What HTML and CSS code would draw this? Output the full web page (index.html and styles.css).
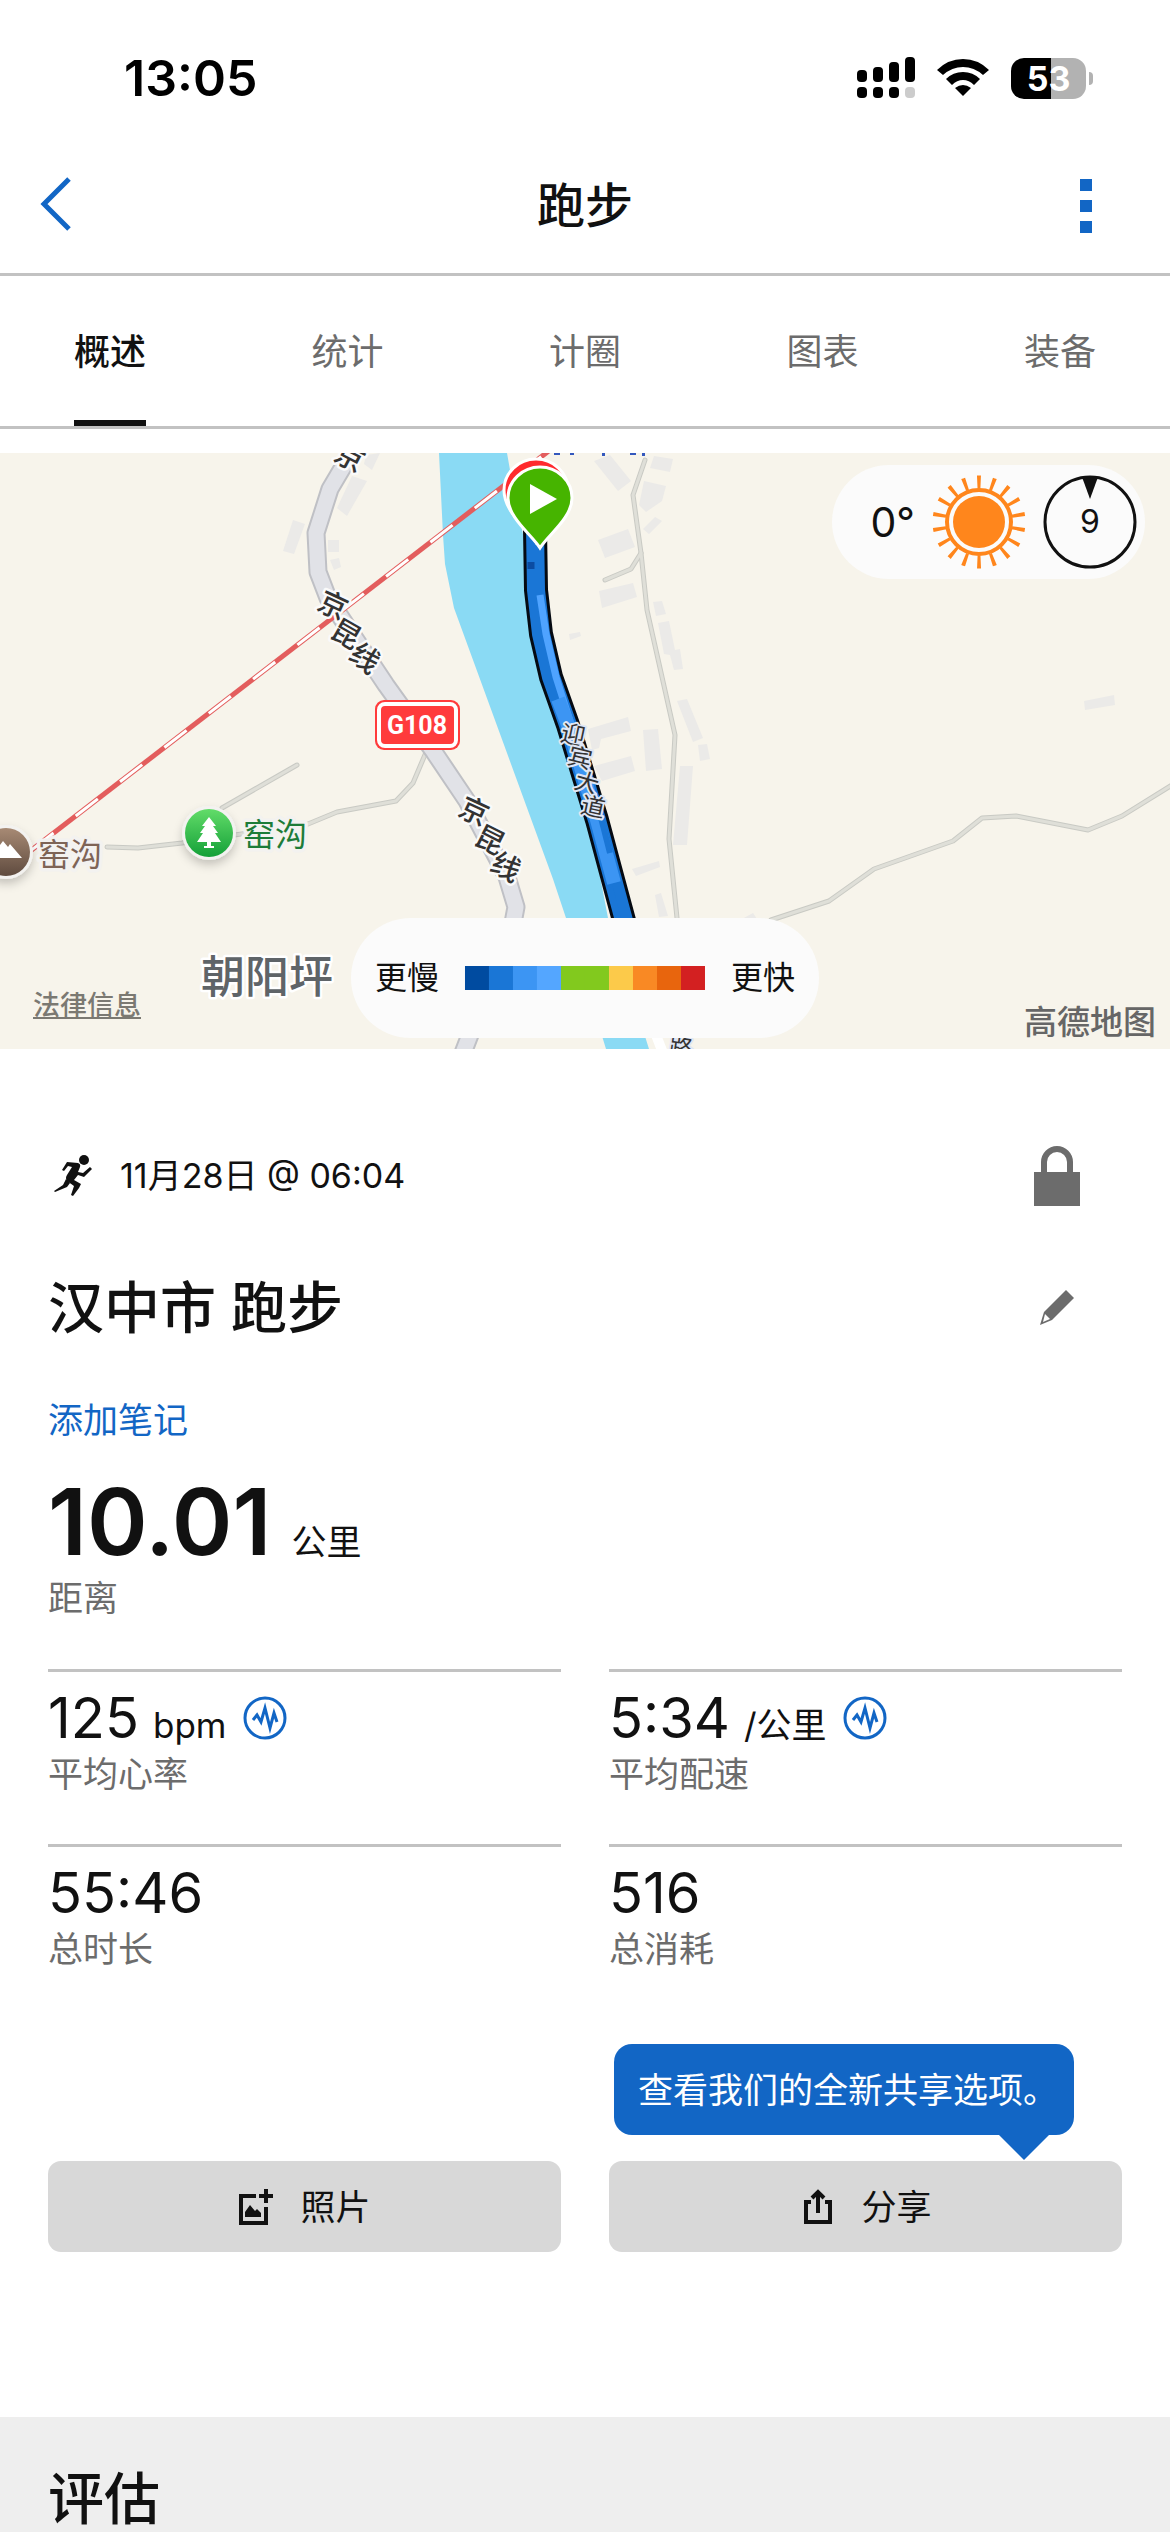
FILE: index.html
```html
<!DOCTYPE html>
<html lang="zh-CN">
<head>
    <meta charset="UTF-8">
    <meta name="viewport" content="width=device-width, initial-scale=1.0">
    <title>跑步</title>
    <link rel="stylesheet" href="styles.css">
</head>
<body>
    <div class="statusbar">
        <span class="time">13:05</span>
        <div class="indicators">
            <svg width="58" height="42" viewBox="0 0 58 42" aria-hidden="true">
                <rect x="0" y="13" width="10" height="12" rx="4"/>
                <rect x="16" y="10" width="10" height="15" rx="4"/>
                <rect x="32" y="5" width="10" height="20" rx="4"/>
                <rect x="48" y="0" width="10" height="25" rx="4"/>
                <rect x="0" y="30" width="10" height="11" rx="4"/>
                <rect x="16" y="30" width="10" height="11" rx="4"/>
                <rect x="32" y="30" width="10" height="11" rx="4"/>
                <rect x="48" y="30" width="10" height="11" rx="4" fill="#ccc"/>
            </svg>
            <svg width="52" height="42" viewBox="0 0 52 42" aria-hidden="true">
                <path d="M0 13Q11 2 26 2T52 13L46 18Q37 10 26 10T6 18Z"/>
                <path d="M9 22Q16 15 26 15T43 22L37 28Q32 23 26 23T15 28Z"/>
                <path d="M18 31Q26 25 34 31L26 39Z"/>
            </svg>
            <div class="battery"><span>53</span></div>
        </div>
    </div>

    <header class="header">
        <button class="icon-btn" aria-label="返回">
            <svg width="32" height="58" viewBox="0 0 32 58"><path d="M29 2L4 27L29 52" fill="none" stroke="#1266c5" stroke-width="5"/></svg>
        </button>
        <h1>跑步</h1>
        <button class="icon-btn more" aria-label="更多">
            <svg width="12" height="54" viewBox="0 0 12 54" fill="#1266c5"><path d="M0 0H12V12H0ZM0 21H12V33H0ZM0 42H12V54H0Z"/></svg>
        </button>
    </header>

    <nav class="tabs">
        <a class="active" href="#">概述</a>
        <a href="#">统计</a>
        <a href="#">计圈</a>
        <a href="#">图表</a>
        <a href="#">装备</a>
    </nav>

    <section class="map">
        <svg class="map-canvas" viewBox="0 0 1170 596" preserveAspectRatio="xMidYMid slice">
            <defs>
                <linearGradient id="green" x1="0" y1="0" x2="0" y2="1"><stop offset="0" stop-color="#62dc69"/><stop offset="1" stop-color="#14a038"/></linearGradient>
                <linearGradient id="brown" x1="0" y1="0" x2="0" y2="1"><stop offset="0" stop-color="#a78a74"/><stop offset="1" stop-color="#5f4b3f"/></linearGradient>
                <filter id="soft" x="-50%" y="-50%" width="200%" height="200%"><feDropShadow dx="0" dy="5" stdDeviation="5" flood-opacity=".2"/></filter>
            </defs>

            <!-- buildings -->
            <g fill="#ebeae8">
                <path d="M293 67L305 71L294 101L283 98ZM352 23L367 28L347 63L337 55ZM328 87H339V99H328ZM330 107L339 105L341 114L334 117ZM366 2L380 0L372 17L364 11Z"/>
                <path d="M594 8L610 2L631 28L618 38ZM654 3L673 6L670 19L650 15ZM644 28L666 33L662 48L646 59L639 52ZM655 64L662 68L649 81L643 76ZM598 87L628 76L635 94L605 105Z"/>
                <path d="M599 138L633 130L637 144L602 155ZM653 149L662 148L666 161L656 163ZM658 170L669 168L675 197L680 196L683 216L674 217L670 202L664 201ZM569 181L580 179L581 183L570 187Z"/>
                <path d="M677 248L687 246L703 285L693 289ZM698 292L707 291L710 306L700 308ZM643 277L658 276L662 316L646 318ZM680 313H693L687 392H673Z"/>
                <path d="M588 276L628 264L631 278L601 286L599 295L592 297ZM594 313L631 303L635 318L602 328ZM632 416L659 408L660 414L636 423ZM655 442L661 440L668 463L659 464ZM742 466L753 460L757 466ZM1084 248L1114 242L1115 252L1085 257Z"/>
            </g>

            <!-- river -->
            <path fill="#8adaf4" d="M439 0L443 82L445 111L454 155L553 426L566 465L606 596H649L608 465L589 366L557 272L532 181L524 86L513 34L507 0Z"/>

            <!-- small roads -->
            <g fill="none" stroke-linejoin="round" stroke-linecap="round">
                <g stroke="#c9cac4" stroke-width="5">
                    <path d="M427 297L413 330L396 348L337 359L308 371L182 390L138 395L107 394"/>
                    <path d="M297 312L222 355"/>
                    <path d="M645 7L633 42L641 100L647 157L675 282L669 386L677 465"/>
                    <path d="M641 100L631 116L605 127"/>
                    <path d="M1172 332L1122 363L1088 377L1016 363L982 365L953 388L874 416L829 448L771 467"/>
                </g>
                <g stroke="#dfdfd8" stroke-width="3">
                    <path d="M427 297L413 330L396 348L337 359L308 371L182 390L138 395L107 394"/>
                    <path d="M297 312L222 355"/>
                    <path d="M645 7L633 42L641 100L647 157L675 282L669 386L677 465"/>
                    <path d="M641 100L631 116L605 127"/>
                    <path d="M1172 332L1122 363L1088 377L1016 363L982 365L953 388L874 416L829 448L771 467"/>
                </g>
                <path d="M656 582L663 600" stroke="#fff" stroke-width="10"/>
            </g>

            <!-- G108 road -->
            <g fill="none" stroke-linejoin="round">
                <path stroke="#bfc0c5" stroke-width="19" d="M356 -8L330 36L316 80L318 119L328 145L386 232L434 299L467 348L507 424L516 454L513 470L463 600"/>
                <path stroke="#e1e2e7" stroke-width="15" d="M356 -8L330 36L316 80L318 119L328 145L386 232L434 299L467 348L507 424L516 454L513 470L463 600"/>
            </g>

            <!-- railway -->
            <g fill="none">
                <path stroke="#e35d5d" stroke-width="5" d="M29 399L550 -3"/>
                <path stroke="#fff" stroke-width="3" stroke-dasharray="28 28" stroke-dashoffset="-3" d="M29 399L550 -3"/>
            </g>

            <!-- recorded track -->
            <g fill="none" stroke-linejoin="round">
                <path stroke="#050a12" stroke-width="24" d="M535 76L536 137L541 181L551 224L568 272L597 367L626 475"/>
                <path stroke="#1a76d6" stroke-width="18" d="M535 76L536 137L541 181L551 224L568 272L597 367L626 475"/>
                <path stroke="#4fa3ff" stroke-width="7" d="M540 142L546 181L556 224L570 268"/>
                <path stroke="#3c95f3" stroke-width="14" d="M558 246L568 272L597 367L614 430"/>
                <path stroke="#1a76d6" stroke-width="6" d="M596 345L610 400"/>
                <path stroke="#1a76d6" stroke-width="10" d="M617 430L628 472"/>
                <path stroke="#0b4ca2" stroke-width="7" d="M531 109V116"/>
            </g>

            <!-- label cut by the top edge -->
            <path d="M552 -1H644" stroke="#f2f1ef" stroke-width="14" stroke-linecap="round" filter="url(#soft)"/>
            <path d="M554 0H560V2H554ZM570 0H574V2H570ZM602 0H605V3H602ZM630 0H636V2H630ZM642 0H645V3H642Z" fill="#3458bd"/>

            <g class="road-name">
                <text transform="translate(350 4) rotate(28)">京</text>
                <text transform="translate(333 152) rotate(25)">京</text>
                <text transform="translate(346 181) rotate(30)">昆</text>
                <text transform="translate(365 205) rotate(36)">线</text>
                <text transform="translate(474 358) rotate(25)">京</text>
                <text transform="translate(490 387) rotate(27)">昆</text>
                <text transform="translate(506 414) rotate(27)">线</text>
            </g>
            <g class="road-name small">
                <text transform="translate(573 282) rotate(12)">迎</text>
                <text transform="translate(580 305) rotate(14)">宾</text>
                <text transform="translate(587 330) rotate(16)">大</text>
                <text transform="translate(593 354) rotate(12)">道</text>
                <text transform="translate(681 594) rotate(8)">路</text>
            </g>

            <!-- road shield -->
            <rect x="375" y="247" width="85" height="50" rx="9" fill="#ff3b3c"/>
            <rect x="379" y="251" width="77" height="42" rx="6" fill="#ff3b3c" stroke="#fff" stroke-width="4"/>
            <text class="shield" x="417" y="281">G108</text>

            <!-- places -->
            <g filter="url(#soft)">
                <circle cx="209" cy="380" r="27" fill="#f3f2f0"/>
                <circle cx="6" cy="399" r="27" fill="#f3f2f0"/>
            </g>
            <circle cx="209" cy="380" r="24" fill="url(#green)"/>
            <path fill="#fff" d="M209 364L216 373H213L218 380H215L221 389H211V393H214V395H204V393H207V389H197L203 380H200L205 373H202Z"/>
            <circle cx="6" cy="399" r="24" fill="url(#brown)"/>
            <path fill="#fff" d="M-10 405L3 388L8 394L10 391L22 405Z"/>
            <text class="place green" x="243" y="393">窑沟</text>
            <text class="place brown" x="38" y="413">窑沟</text>
            <text class="town" x="201" y="540">朝阳坪</text>

            <!-- finish and start pins -->
            <path d="M536 89C528 75 504 60 504 37A32 31 0 0 1 568 37C568 60 544 75 536 89Z" fill="#ff2a2e" stroke="#fff" stroke-width="3"/>
            <path d="M540 95C532 82 508 65 508 45A32 31 0 0 1 572 45C572 65 548 82 540 95Z" fill="#46b400" stroke="#fff" stroke-width="3"/>
            <path d="M530 31L557 46L530 61Z" fill="#fff"/>
        </svg>

        <div class="weather">
            <span class="temp">0°</span>
            <svg width="94" height="94" viewBox="0 0 94 94" role="img" aria-label="晴">
                <circle cx="47" cy="47" r="26" fill="#ff861c"/>
                <circle cx="47" cy="47" r="32" fill="none" stroke="#ff861c" stroke-width="4"/>
                <circle cx="47" cy="47" r="40" fill="none" stroke="#ff861c" stroke-width="13" pathLength="72" stroke-dasharray="1 3" transform="rotate(-92.5 47 47)"/>
            </svg>
            <svg width="94" height="94" viewBox="0 0 94 94" role="img" aria-label="风速 9">
                <circle cx="47" cy="47" r="45" fill="none" stroke="#111" stroke-width="3"/>
                <path d="M39 2H55L47 24Z" fill="#111"/>
                <text class="wind" x="47" y="58">9</text>
            </svg>
        </div>

        <div class="legend">
            <span>更慢</span>
            <div class="scale"><i class="c1"></i><i class="c2"></i><i class="c3"></i><i class="c4"></i><i class="c5"></i><i class="c5"></i><i class="c6"></i><i class="c7"></i><i class="c8"></i><i class="c9"></i></div>
            <span>更快</span>
        </div>
        <a class="legal" href="#">法律信息</a>
        <span class="map-brand">高德地图</span>
    </section>

    <main class="content">
        <div class="row meta">
            <svg width="40" height="42" viewBox="0 0 40 42" fill="#111" aria-hidden="true">
                <circle cx="30" cy="5" r="5"/>
                <path d="M13 7L24 8Q27 9 26 12L24 17L29 18L36 12L38 14L30 22L24 20L20 25L27 29L25 33L19 41L17 40L20 31L13 26Q11 23 13 20L18 12L14 11L10 16L8 15Z"/>
                <path d="M12 24L16 28L13 32L1 37L0 36L9 30Z"/>
            </svg>
            <span class="date">11月28日 @ 06:04</span>
            <button class="icon-btn" aria-label="隐私">
                <svg width="88" height="60" viewBox="0 0 88 60"><path d="M10 27V16A13 13 0 0 1 36 16V27" fill="none" stroke="#6c6c6c" stroke-width="6"/><path d="M0 26H46V60H0Z" fill="#6c6c6c"/></svg>
            </button>
        </div>
        <div class="row title">
            <h2>汉中市 跑步</h2>
            <button class="icon-btn" aria-label="编辑">
                <svg width="82" height="36" viewBox="0 0 82 36"><path d="M26 0L34 8L12 30L0 35L4 22Z" fill="#6c6c6c"/><path d="M5 24L10 29L3 32Z" fill="#fff"/></svg>
            </button>
        </div>
        <a class="note" href="#">添加笔记</a>

        <div class="distance">
            <div class="figure"><strong>10.01</strong><span>公里</span></div>
            <div class="label">距离</div>
        </div>

        <div class="stats">
            <div class="stat">
                <div class="value"><b>125</b><span>bpm</span>
                    <svg width="44" height="44" viewBox="0 0 44 44" fill="none" stroke="#1266c5"><circle cx="22" cy="22" r="20" stroke-width="3"/><path stroke-width="3" d="M10 24L14 19L18 26L22 12L27 32L31 17L34 26"/></svg>
                </div>
                <div class="label">平均心率</div>
            </div>
            <div class="stat">
                <div class="value"><b>5:34</b><span>/公里</span>
                    <svg width="44" height="44" viewBox="0 0 44 44" fill="none" stroke="#1266c5"><circle cx="22" cy="22" r="20" stroke-width="3"/><path stroke-width="3" d="M10 24L14 19L18 26L22 12L27 32L31 17L34 26"/></svg>
                </div>
                <div class="label">平均配速</div>
            </div>
            <div class="stat">
                <div class="value"><b>55:46</b></div>
                <div class="label">总时长</div>
            </div>
            <div class="stat">
                <div class="value"><b>516</b></div>
                <div class="label">总消耗</div>
            </div>
        </div>

        <div class="actions">
            <button class="action">
                <svg width="36" height="36" viewBox="0 0 36 36" fill="none" stroke="#111" stroke-width="4"><path d="M18 7H3V34H28V18"/><path d="M28 0V14M21 7H35"/><path d="M7 28V23L12 16L17 22L19 20L23 24V28Z" fill="#111" stroke="none"/></svg>
                照片
            </button>
            <div class="share">
                <div class="tooltip" role="tooltip">查看我们的全新共享选项。</div>
                <button class="action">
                    <svg width="36" height="36" viewBox="0 0 36 36" fill="none" stroke="#111" stroke-width="4"><path d="M12 13H7V33H31V13H26"/><path d="M19 24V4M13 9L19 3L25 9"/></svg>
                    分享
                </button>
            </div>
        </div>
    </main>

    <section class="evaluation">
        <h2>评估</h2>
    </section>
</body>
</html>
```

FILE: styles.css
```css
* { box-sizing: border-box; }
body {
    margin: 0;
    min-height: 100vh;
    display: flex;
    flex-direction: column;
    background: #fff;
    color: #111;
    font: 35px/48px Inter, "Noto Sans CJK SC", sans-serif;
}
h1, h2 { margin: 0; font-weight: 500; }
a { color: inherit; text-decoration: none; }
button { font: inherit; color: inherit; border: none; cursor: pointer; }
svg { display: block; flex: none; }
.icon-btn { padding: 0; background: none; }

/* status bar */
.statusbar { display: flex; justify-content: space-between; align-items: center; height: 156px; padding: 0 76px 0 124px; color: #000; }
.time { font-size: 50px; font-weight: 600; }
.indicators { display: flex; align-items: center; gap: 22px; }
.battery {
    position: relative;
    width: 75px;
    height: 41px;
    margin-right: 8px;
    border-radius: 13px;
    background: linear-gradient(90deg, #000 53%, #b2b2b2 53%);
    color: #fff;
    text-align: center;
    font-size: 34px;
    font-weight: 700;
    line-height: 41px;
}
.battery::after { content: ""; position: absolute; right: -7px; top: 14px; width: 4px; height: 13px; border-radius: 0 4px 4px 0; background: #b2b2b2; }

/* header */
.header { display: grid; grid-template-columns: 1fr auto 1fr; align-items: center; height: 120px; padding: 0 40px 17px; border-bottom: 3px solid #c2c2c2; }
.header h1 { font-size: 48px; line-height: 64px; }
.header .icon-btn { justify-self: start; }
.header .more { justify-self: end; padding-right: 38px; }

.tabs { display: flex; justify-content: space-between; padding: 0 74px; border-bottom: 3px solid #c2c2c2; color: #6c6c6c; font-size: 36px; }
.tabs a { height: 150px; line-height: 152px; border-bottom: 6px solid transparent; }
.tabs .active { color: #111; font-weight: 500; border-color: #111; }

/* map */
.map { position: relative; height: 596px; margin-top: 24px; background: #f7f4eb; overflow: hidden; }
.map-canvas { width: 100%; height: 100%; }
.map text { paint-order: stroke; stroke-linejoin: round; }
.road-name text { font-size: 29px; font-weight: 500; fill: #333; stroke: #fafafa; stroke-width: 5px; text-anchor: middle; dominant-baseline: central; }
.road-name.small text { font-size: 24px; font-weight: 400; stroke: #dfe6f5; stroke-width: 4px; }
.map .shield { font: 700 25px Roboto, sans-serif; fill: #fff; text-anchor: middle; }
.place { font-size: 32px; stroke: #f3f2f0; stroke-width: 7px; }
.green { fill: #1d7c38; }
.brown { fill: #7e6456; }
.town { font-size: 44px; font-weight: 500; fill: #5f6468; stroke: #fff; stroke-width: 5px; }
.weather { position: absolute; top: 12px; right: 25px; display: flex; align-items: center; gap: 17px; height: 114px; padding: 0 8px 0 38px; border-radius: 57px; background: #fbfbfb; }
.temp { font-size: 41px; }
.wind { font-size: 32px; fill: #111; text-anchor: middle; }
.legend { position: absolute; left: 50%; bottom: 11px; transform: translateX(-50%); display: flex; align-items: center; gap: 26px; height: 120px; padding: 0 24px; border-radius: 60px; background: #fbfbfb; font-size: 32px; white-space: nowrap; }
.scale { display: flex; }
.scale i { width: 24px; height: 24px; }
.c1 { background: #004ba0; }
.c2 { background: #1a76d6; }
.c3 { background: #3c95f3; }
.c4 { background: #54a6ff; }
.c5 { background: #82c91e; }
.c6 { background: #fcca4a; }
.c7 { background: #f98924; }
.c8 { background: #e8650d; }
.c9 { background: #d32021; }
.legal { position: absolute; left: 33px; bottom: 19px; color: #7b7972; font-size: 27px; font-weight: 500; text-decoration: underline; }
.map-brand { position: absolute; right: 14px; bottom: 3px; color: #666; font-size: 33px; font-weight: 500; }

/* activity summary */
.content { padding: 95px 48px 0; }
.row { display: flex; align-items: center; }
.row .icon-btn { margin-left: auto; }
.meta { height: 64px; padding-left: 6px; gap: 26px; }
.date { font-size: 34px; }
.title { margin-top: 60px; }
.title h2, .evaluation h2 { font-size: 56px; line-height: 80px; }
.note { display: block; margin-top: 48px; color: #1266c5; }
.distance { margin-top: 30px; }
.figure { display: flex; align-items: baseline; gap: 20px; height: 96px; margin-bottom: 4px; }
.figure strong { font-size: 92px; line-height: 96px; font-weight: 600; }
.label { color: #6c6c6c; }
.stats { display: grid; grid-template-columns: 1fr 1fr; column-gap: 48px; margin-top: 47px; }
.stat { height: 175px; padding-top: 14px; border-top: 3px solid #c2c2c2; }
.value { display: flex; align-items: baseline; gap: 14px; height: 64px; }
.value b { font-size: 56px; line-height: 64px; font-weight: 400; }
.value svg { align-self: center; margin-left: 2px; }

.actions { display: grid; grid-template-columns: 1fr 1fr; column-gap: 48px; margin-top: 142px; }
.action { display: flex; justify-content: center; align-items: center; gap: 26px; width: 100%; height: 91px; border-radius: 13px; background: #d8d8d8; }
.share { position: relative; }
.tooltip { position: absolute; right: 48px; bottom: 117px; padding: 22px 16px 21px 24px; border-radius: 18px; background: #1266c5; color: #fff; white-space: nowrap; }
.tooltip::after { content: ""; position: absolute; right: 25px; top: 100%; border: 25px solid transparent; border-top-color: #1266c5; border-bottom: 0; }

.evaluation { flex: 1; margin-top: 165px; padding: 50px 48px 0; background: #eee; }
.evaluation h2 { line-height: 64px; }
```
